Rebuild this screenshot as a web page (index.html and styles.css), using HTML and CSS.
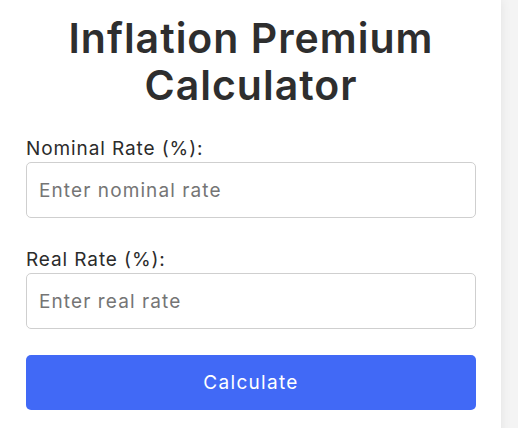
FILE: index.html
```html
<!DOCTYPE html>
<html lang="en">
<head>
<meta charset="utf-8">
<title>Inflation Premium Calculator</title>
<link rel="stylesheet" href="styles.css">
</head>
<body>
<div class="card">
  <h1 class="title">Inflation Premium Calculator</h1>
  <div class="field">
    <label class="label" for="nominal">Nominal Rate (%):</label>
    <input class="input" id="nominal" type="number" placeholder="Enter nominal rate">
  </div>
  <div class="field">
    <label class="label" for="real">Real Rate (%):</label>
    <input class="input" id="real" type="number" placeholder="Enter real rate">
  </div>
  <button class="btn" type="button">Calculate</button>
</div>
</body>
</html>
```

FILE: styles.css
```css
html, body {
  margin: 0;
  padding: 0;
}
body {
  background: #f4f4f4;
  font-family: Inter, "Open Sans", sans-serif;
  color: #333;
  height: 428px;
  overflow: hidden;
}
.card {
  width: 450px;
  background: #fff;
  padding: 15px 25px 30px 26px;
  box-shadow: 0 0 10px rgba(0, 0, 0, 0.08);
  min-height: 400px;
}
.title {
  margin: 0 0 24px;
  text-align: center;
  font-size: 41px;
  line-height: 47px;
  font-weight: 600;
  letter-spacing: 1px;
  color: #2e2e2e;
}
.field {
  margin-bottom: 26px;
}
.label {
  display: block;
  padding-top: 5px;
  font-size: 19px;
  line-height: 22px;
  letter-spacing: 0.9px;
  margin-bottom: 2px;
  color: #2b2b2b;
}
.input {
  display: block;
  box-sizing: border-box;
  width: 100%;
  height: 56px;
  padding: 0 12px;
  border: 1px solid #cfcfcf;
  border-radius: 5px;
  font-family: inherit;
  font-size: 19px;
  letter-spacing: 1.1px;
  color: #333;
  outline: none;
  -moz-appearance: textfield;
}
.input::placeholder {
  color: #757575;
}
.btn {
  display: block;
  width: 100%;
  height: 55px;
  border: 0;
  border-radius: 5px;
  background: #4169f6;
  color: #fff;
  font-family: inherit;
  font-size: 19px;
  letter-spacing: 1.3px;
}
```
